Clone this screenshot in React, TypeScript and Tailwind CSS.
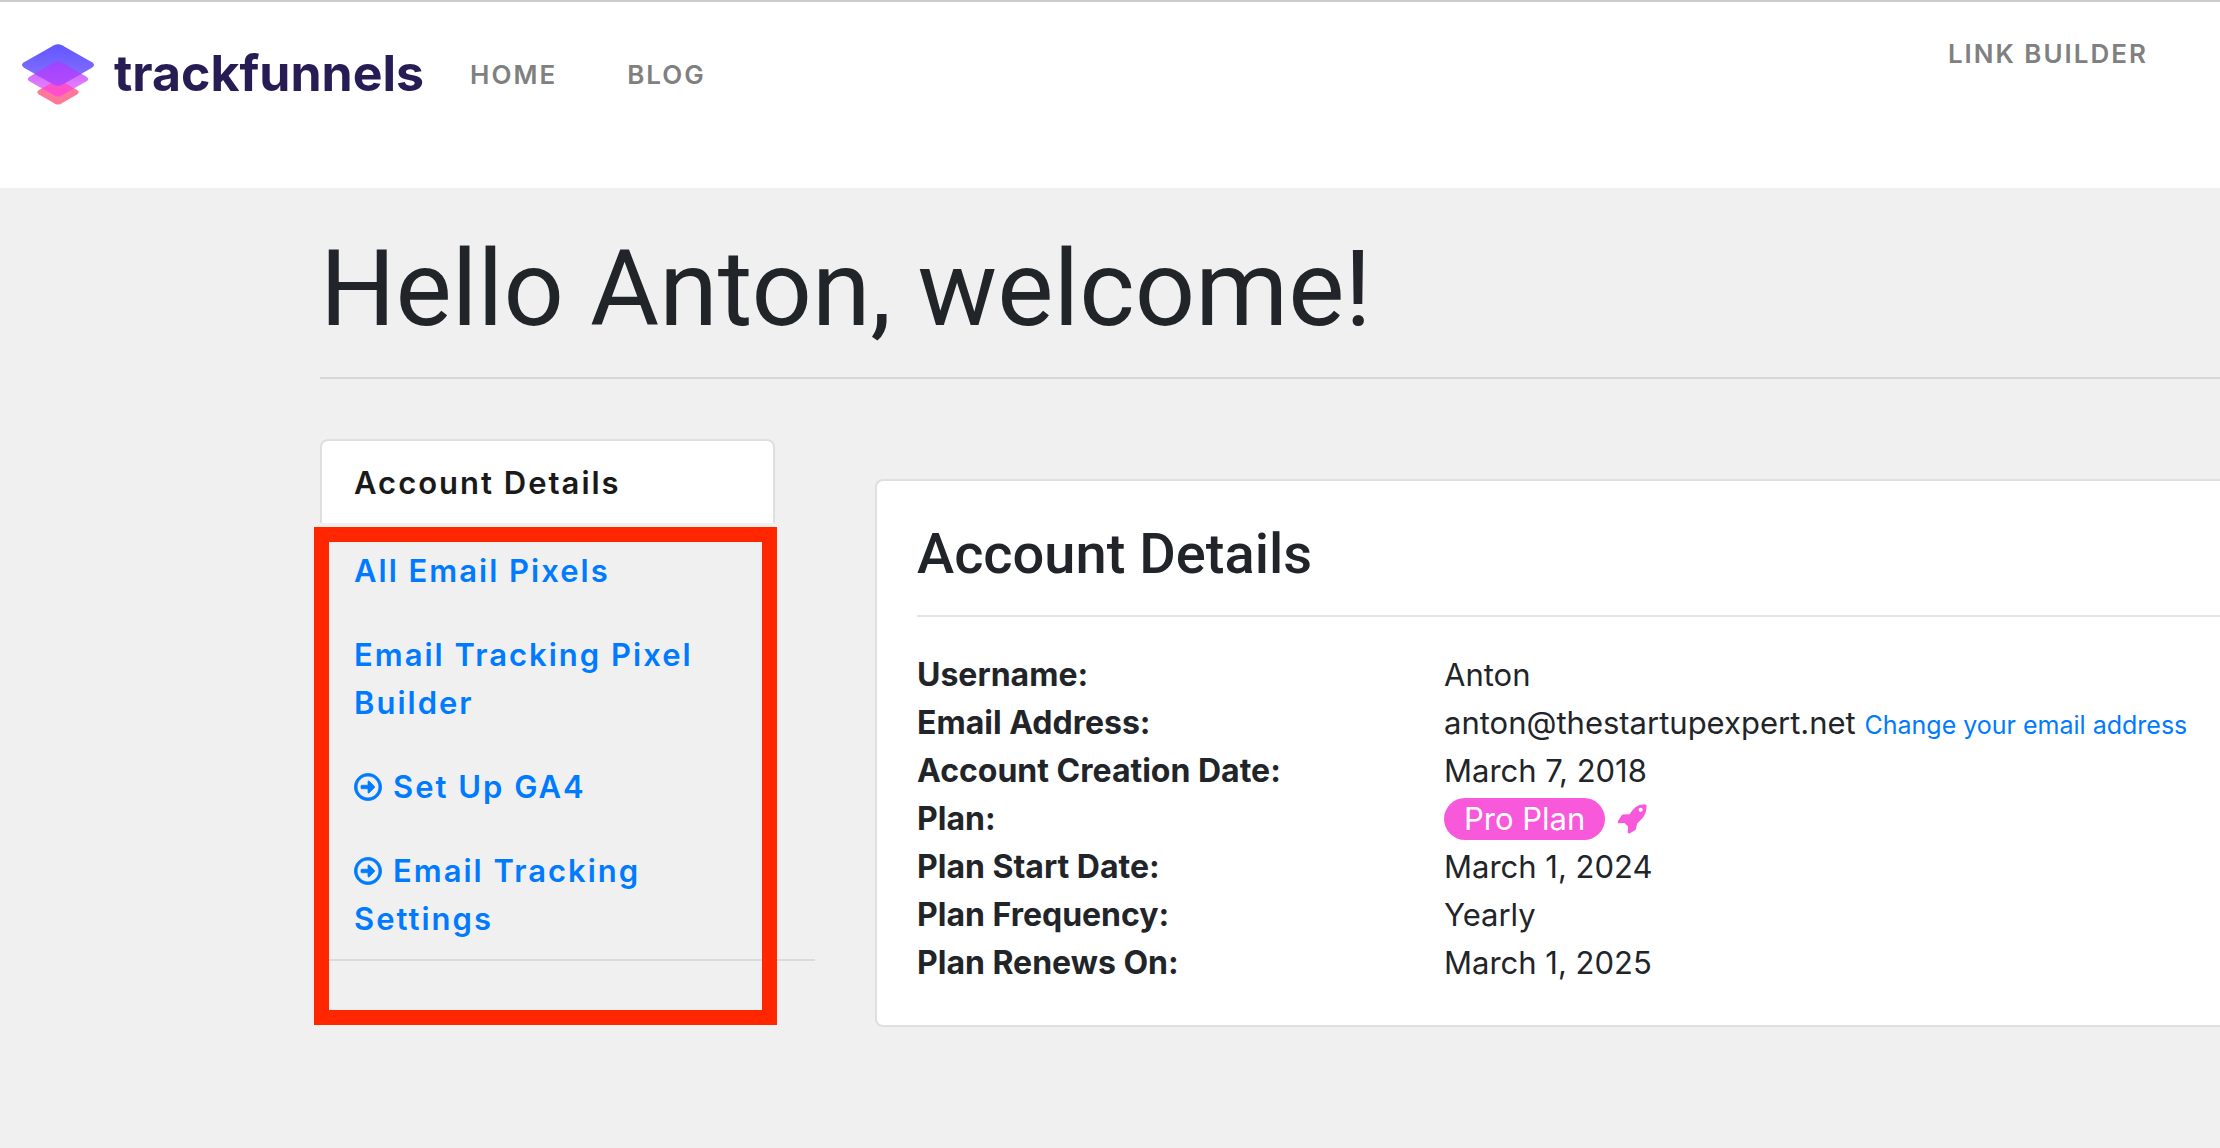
import type { ReactNode } from "react";
import { FaRegArrowAltCircleRight } from "react-icons/fa";

interface SidebarItem {
  label: string;
  icon?: boolean;
}

interface DetailRow {
  label: string;
  value: ReactNode;
}

const sidebarItems: SidebarItem[] = [
  { label: "All Email Pixels" },
  { label: "Email Tracking Pixel Builder" },
  { label: "Set Up GA4", icon: true },
  { label: "Email Tracking Settings", icon: true },
];

const detailRows: DetailRow[] = [
  { label: "Username:", value: "Anton" },
  {
    label: "Email Address:",
    value: (
      <>
        anton@thestartupexpert.net{" "}
        <a href="#change-email" className="text-[25px] leading-none text-[#007bff]">
          Change your email address
        </a>
      </>
    ),
  },
  { label: "Account Creation Date:", value: "March 7, 2018" },
  {
    label: "Plan:",
    value: (
      <span className="flex h-12 items-center gap-3">
        <span className="rounded-full bg-[#f858da] px-5 leading-[42px] text-white">
          Pro Plan
        </span>
        <RocketIcon />
      </span>
    ),
  },
  { label: "Plan Start Date:", value: "March 1, 2024" },
  { label: "Plan Frequency:", value: "Yearly" },
  { label: "Plan Renews On:", value: "March 1, 2025" },
];

function RocketIcon() {
  return (
    <svg viewBox="0 0 30 30" className="size-[30px] text-[#f858da]" aria-hidden="true">
      <path
        fill="currentColor"
        fillRule="evenodd"
        d="M28.4 0.5Q29.6 0.4 29.5 1.6C29.6 5.5 29 9 27 12C25 15 22.6 17.3 20.2 19.6L18.9 25Q18.7 25.8 18 26.2L12.9 29.2C11.6 29.8 10.6 29 10.7 27.8L11 22.6L7.4 18.9L2.2 19.3C0.9 19.3 0.4 18.3 0.9 17.2L4.5 11.4Q5 10.6 5.9 10.5L12.6 10.2C15 6.5 17.6 3.2 20.8 1.7C23 0.7 25.8 0.5 28.4 0.5ZM23.7 3.7A2.1 2.1 0 1 0 23.7 7.9A2.1 2.1 0 1 0 23.7 3.7Z"
      />
    </svg>
  );
}

function LogoMark() {
  return (
    <svg viewBox="0 0 72 62" className="h-[62px] w-[72px]" aria-hidden="true">
      <defs>
        <linearGradient id="top" x1="0" y1="0" x2="0" y2="1">
          <stop offset="0" stopColor="#6157ff" />
          <stop offset="1" stopColor="#8b73ff" />
        </linearGradient>
        <linearGradient id="middle" x1="0" y1="0" x2="0" y2="1">
          <stop offset="0.3" stopColor="#d069ff" />
          <stop offset="1" stopColor="#ea8cff" />
        </linearGradient>
        <linearGradient id="overlap" x1="0" y1="0" x2="0" y2="1">
          <stop offset="0" stopColor="#9b46ff" />
          <stop offset="0.7" stopColor="#b848fb" />
        </linearGradient>
        <path
          id="top-shape"
          d="M32 1.2Q36 -0.8 40 1.2L70 18.3Q74 21 70 23.7L40 40.8Q36 42.8 32 40.8L2 23.7Q-2 21 2 18.3Z"
        />
        <path
          id="middle-shape"
          d="M33 18Q36 16.4 39 18L64.5 32.7Q68 35 64.5 37.3L39 52Q36 53.6 33 52L7.5 37.3Q4 35 7.5 32.7Z"
        />
        <path
          id="bottom-shape"
          d="M33 36.7Q36 35 39 36.7L55 46Q58.5 48.2 55 50.4L39 59.7Q36 61.4 33 59.7L17 50.4Q13.5 48.2 17 46Z"
        />
        <clipPath id="clip-top">
          <use href="#top-shape" />
        </clipPath>
        <clipPath id="clip-middle">
          <use href="#middle-shape" />
        </clipPath>
      </defs>
      <use href="#bottom-shape" fill="#ff7799" />
      <use href="#middle-shape" fill="url(#middle)" />
      <use href="#bottom-shape" fill="#ff50cb" clipPath="url(#clip-middle)" />
      <use href="#top-shape" fill="url(#top)" />
      <use href="#middle-shape" fill="url(#overlap)" clipPath="url(#clip-top)" />
    </svg>
  );
}

function Header() {
  const linkClass = "text-[26px] leading-9 font-semibold tracking-[2px] text-[#808080]";

  return (
    <header className="flex h-[188px] items-start justify-between border-t-2 border-[#cccccc] bg-white pr-[72px] pl-[22px]">
      <div className="flex items-center pt-[42px]">
        <a href="#top" className="flex items-center gap-5">
          <LogoMark />
          <span className="pb-1 text-[50px] leading-[58px] font-bold text-[#271c54]">
            trackfunnels
          </span>
        </a>
        <nav className="ml-[46px] flex gap-[70px]">
          <a href="#home" className={linkClass}>
            HOME
          </a>
          <a href="#blog" className={linkClass}>
            BLOG
          </a>
        </nav>
      </div>
      <a href="#link-builder" className={`${linkClass} pt-[34px]`}>
        LINK BUILDER
      </a>
    </header>
  );
}

function Sidebar() {
  return (
    <aside className="relative w-[495px] shrink-0">
      <nav className="border-b-2 border-[#dcdcdc] text-[31px] leading-12 font-semibold tracking-[2px]">
        <a
          href="#account"
          className="mr-10 mb-1 block rounded-t-lg border-2 border-b-0 border-[#dee0e0] bg-white px-8 pt-[18px] pb-4 text-[#1a1a1a]"
        >
          Account Details
        </a>
        {sidebarItems.map((item) => (
          <a
            key={item.label}
            href="#"
            className="mr-10 block px-[34px] pt-5 pb-4 text-[#007bff]"
          >
            {item.icon && (
              <FaRegArrowAltCircleRight
                className="mr-[11px] inline size-7 overflow-visible align-[-3px]"
                stroke="currentColor"
                strokeWidth={14}
              />
            )}
            {item.label}
          </a>
        ))}
      </nav>
      {/* Highlight frame over the tracking links */}
      <div className="pointer-events-none absolute top-[88px] right-[38px] -bottom-16 -left-[6px] border-[15px] border-[#ff2600]" />
    </aside>
  );
}

function AccountCard() {
  return (
    <section className="mt-10 min-w-0 flex-1 rounded-l-lg border-2 border-r-0 border-[#dfdfdf] bg-white pt-10 pb-[38px] pl-10">
      <h2 className="font-['Roboto',sans-serif] text-[56px] leading-[66px] font-medium">
        Account Details
      </h2>
      <hr className="mt-7 mb-[34px] border-t-2 border-[#e5e5e5]" />
      <dl className="grid grid-cols-[527px_1fr] leading-12 whitespace-nowrap">
        {detailRows.map((row) => (
          <div key={row.label} className="contents">
            <dt className="text-[32px] font-bold">{row.label}</dt>
            <dd className="h-12 text-[31px]">{row.value}</dd>
          </div>
        ))}
      </dl>
    </section>
  );
}

export default function App() {
  return (
    <div className="min-h-screen overflow-hidden bg-[#f0f0f0] font-['Inter',sans-serif] leading-12 text-[#212529]">
      <Header />
      <main className="pl-80">
        <h1 className="pt-9 font-['Roboto',sans-serif] text-[106px] leading-[130px] font-normal">
          Hello Anton, welcome!
        </h1>
        <hr className="mt-[23px] border-t-2 border-[#d6d6d6]" />
        <div className="flex items-start gap-[60px] pt-[60px]">
          <Sidebar />
          <AccountCard />
        </div>
      </main>
    </div>
  );
}
